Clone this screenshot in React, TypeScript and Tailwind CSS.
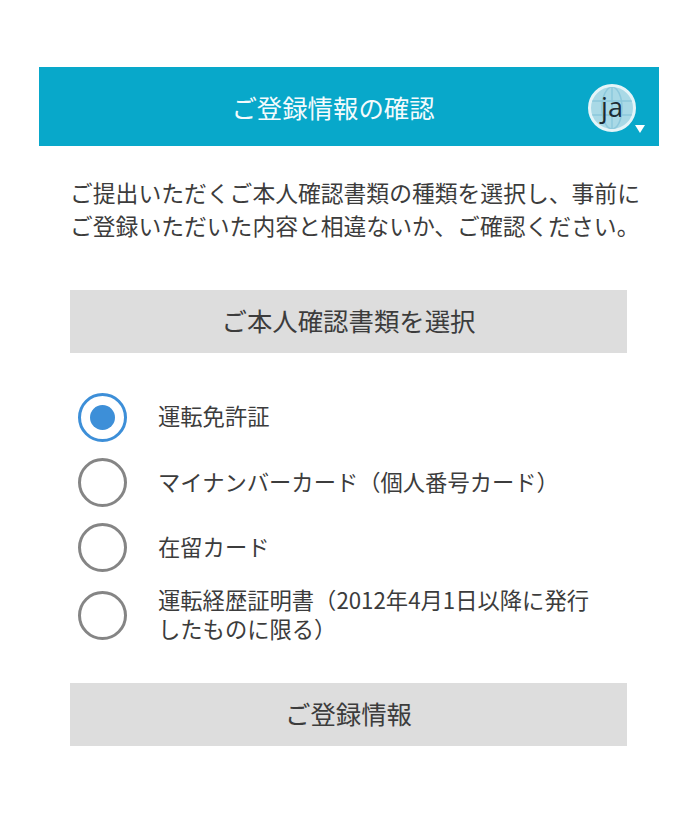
import React from "react";

const font = { fontFamily: '"Noto Sans CJK JP", "Noto Sans", sans-serif' };

const options = [
  { label: "運転免許証", checked: true, h: "h-[66px]" },
  { label: "マイナンバーカード（個人番号カード）", h: "h-[65px]" },
  { label: "在留カード", h: "h-[65px]" },
  { label: "運転経歴証明書（2012年4月1日以降に発行\nしたものに限る）", h: "h-[70px]" },
];

function Radio({ checked }: { checked?: boolean }) {
  return (
    <div
      className={
        "flex h-[49px] w-[49px] shrink-0 items-center justify-center rounded-full border-[3.5px] bg-white " +
        (checked ? "border-[#3d8fd8]" : "border-[#858585]")
      }
    >
      {checked && <div className="h-[25px] w-[25px] rounded-full bg-[#3d8fd8]" />}
    </div>
  );
}

function Avatar() {
  return (
    <div className="relative h-[50px] w-[50px]">
      <div className="relative flex h-[48px] w-[48px] items-center justify-center overflow-hidden rounded-full border-[3px] border-[#e4f4f8] bg-[#a9d9e6]">
        <svg viewBox="0 0 42 42" className="absolute inset-0 h-full w-full" fill="none" stroke="#8cc8dc" strokeWidth="1.5">
          <ellipse cx="21" cy="21" rx="10" ry="21" />
          <path d="M0 14h42M0 28h42M21 0v42" />
        </svg>
        <span className="relative pb-[3px] text-[27px] leading-none text-[#1c2b33]" style={{ fontFamily: '"Open Sans", sans-serif' }}>
          ja
        </span>
      </div>
      <svg viewBox="0 0 10 8" className="absolute bottom-[1px] right-[-7px] h-[8px] w-[10px]">
        <path d="M0 0h10L5 8z" fill="#fff" />
      </svg>
    </div>
  );
}

export default function App() {
  return (
    <div className="min-h-[830px] bg-white px-[39px] pt-[67px] text-[#3c3c3c]" style={font}>
      <header className="relative flex h-[79px] w-[620px] items-center justify-center bg-[#08a8ca] pr-[32px] pt-[1px]">
        <h1 className="text-[25.4px] text-[#f4fbfd]">ご登録情報の確認</h1>
        <div className="absolute right-[21px] top-[17px]">
          <Avatar />
        </div>
      </header>

      <div className="px-[31px] pt-[30px]">
        <p className="text-[22.8px] leading-[33px] whitespace-nowrap">
          ご提出いただくご本人確認書類の種類を選択し、事前に
          <br />
          ご登録いただいた内容と相違ないか、ご確認ください。
        </p>

        <div className="mt-[48px] flex h-[63px] w-[557px] items-center justify-center bg-[#dddddd] pb-[3px] text-[25.4px]">
          ご本人確認書類を選択
        </div>

        <ul className="mt-[31px]">
          {options.map((o) => (
            <li key={o.label} className={"flex items-center pl-[8px] " + o.h}>
              <Radio checked={o.checked} />
              <span className="ml-[31px] pb-[3px] text-[22.3px] leading-[29px] whitespace-pre-line">{o.label}</span>
            </li>
          ))}
        </ul>

        <div className="mt-[33px] flex h-[63px] w-[557px] items-center justify-center bg-[#dddddd] pb-[3px] text-[25.4px]">
          ご登録情報
        </div>
      </div>
    </div>
  );
}
